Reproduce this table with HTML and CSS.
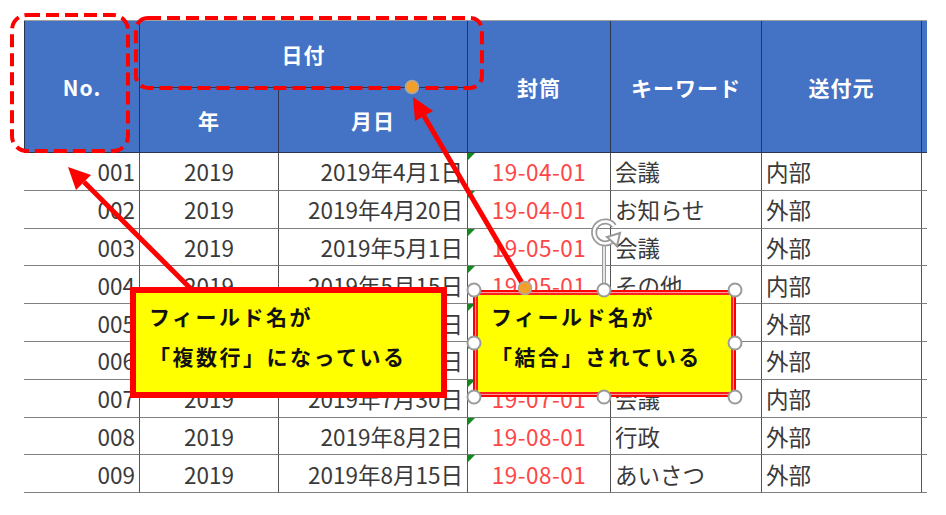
FILE: index.html
```html
<!DOCTYPE html>
<html lang="ja">
<head>
<meta charset="utf-8">
<link rel="stylesheet" href="styles.css">
</head>
<body>
<div class="page">
  <div class="sheet">
    <div class="hc h-no">No.</div>
    <div class="hc h-date">日付</div>
    <div class="hc h-env">封筒</div>
    <div class="hc h-kw">キーワード</div>
    <div class="hc h-from">送付元</div>
    <div class="hc h-rest"></div>
    <div class="hc h-year">年</div>
    <div class="hc h-md">月日</div>

    <div class="c num">001</div><div class="c ctr">2019</div><div class="c num">2019年4月1日</div><div class="c env">19-04-01</div><div class="c txt">会議</div><div class="c txt">内部</div><div class="c rest"></div>
    <div class="c num">002</div><div class="c ctr">2019</div><div class="c num">2019年4月20日</div><div class="c env">19-04-01</div><div class="c txt">お知らせ</div><div class="c txt">外部</div><div class="c rest"></div>
    <div class="c num">003</div><div class="c ctr">2019</div><div class="c num">2019年5月1日</div><div class="c env">19-05-01</div><div class="c txt">会議</div><div class="c txt">外部</div><div class="c rest"></div>
    <div class="c num">004</div><div class="c ctr">2019</div><div class="c num">2019年5月15日</div><div class="c env">19-05-01</div><div class="c txt">その他</div><div class="c txt">内部</div><div class="c rest"></div>
    <div class="c num">005</div><div class="c ctr">2019</div><div class="c num">2019年6月3日</div><div class="c env">19-06-01</div><div class="c txt">会議</div><div class="c txt">外部</div><div class="c rest"></div>
    <div class="c num">006</div><div class="c ctr">2019</div><div class="c num">2019年6月20日</div><div class="c env">19-06-01</div><div class="c txt">行政</div><div class="c txt">外部</div><div class="c rest"></div>
    <div class="c num">007</div><div class="c ctr">2019</div><div class="c num">2019年7月30日</div><div class="c env">19-07-01</div><div class="c txt">会議</div><div class="c txt">内部</div><div class="c rest"></div>
    <div class="c num">008</div><div class="c ctr">2019</div><div class="c num">2019年8月2日</div><div class="c env">19-08-01</div><div class="c txt">行政</div><div class="c txt">外部</div><div class="c rest"></div>
    <div class="c num">009</div><div class="c ctr">2019</div><div class="c num">2019年8月15日</div><div class="c env">19-08-01</div><div class="c txt">あいさつ</div><div class="c txt">外部</div><div class="c rest"></div>
  </div>

  <svg class="marks" width="946" height="515" viewBox="0 0 946 515">
    <rect x="12" y="15" width="116" height="136" rx="15" fill="none" stroke="#ff0000" stroke-width="4" stroke-dasharray="13 6"/>
    <rect x="136" y="18" width="346" height="70" rx="12" fill="none" stroke="#ff0000" stroke-width="4" stroke-dasharray="13 6"/>
    <line x1="192" y1="290" x2="84" y2="182" stroke="#ff0000" stroke-width="5"/>
    <polygon points="68,167 91,175 76,190" fill="#ff0000"/>
    <line x1="525" y1="288" x2="424" y2="116" stroke="#ff0000" stroke-width="5"/>
    <polygon points="413,97 433,111 415,121" fill="#ff0000"/>
    <circle cx="412" cy="87" r="6.5" fill="#f2a02a" stroke="#a8a8a8" stroke-width="1.5"/>
  </svg>

  <div class="callout callout-a">
    <p>フィールド名が</p>
    <p>「複数行」になっている</p>
  </div>
  <div class="callout callout-b">
    <p>フィールド名が</p>
    <p>「結合」されている</p>
  </div>

  <svg class="handles" width="946" height="515" viewBox="0 0 946 515">
    <line x1="604" y1="244" x2="604" y2="286" stroke="#9a9a9a" stroke-width="4"/>
    <line x1="604" y1="244" x2="604" y2="286" stroke="#ffffff" stroke-width="1.5"/>
    <path d="M612 241 A11 11 0 1 1 614 226" fill="none" stroke="#9a9a9a" stroke-width="6"/>
    <path d="M612 241 A11 11 0 1 1 614 226" fill="none" stroke="#ffffff" stroke-width="2.5"/>
    <polygon points="607,237 620,233 617,246" fill="#ffffff" stroke="#9a9a9a" stroke-width="2"/>
    <g fill="#ffffff" stroke="#9a9a9a" stroke-width="2">
      <circle cx="474" cy="290" r="6.5"/>
      <circle cx="604" cy="290" r="6.5"/>
      <circle cx="735" cy="290" r="6.5"/>
      <circle cx="474" cy="343" r="6.5"/>
      <circle cx="735" cy="343" r="6.5"/>
      <circle cx="474" cy="397" r="6.5"/>
      <circle cx="604" cy="397" r="6.5"/>
      <circle cx="735" cy="397" r="6.5"/>
    </g>
    <circle cx="525" cy="288" r="6.5" fill="#f2a02a" stroke="#a8a8a8" stroke-width="1.5"/>
  </svg>
</div>
</body>
</html>
```

FILE: styles.css
```css
* { box-sizing: border-box; }
html, body { margin: 0; padding: 0; background: #ffffff; }
.page {
  position: relative;
  width: 946px;
  height: 515px;
  padding: 20px 0 0 24px;
  font-family: "Noto Sans CJK JP", "Noto Sans", sans-serif;
}
.sheet {
  display: grid;
  grid-template-columns: 116px 139px 189px 143px 151px 160px 5px;
  grid-template-rows: 67px 65px repeat(9, 37.8px);
  width: 903px;
  border-top: 1px solid #a0a0a0;
}
.hc {
  background: #4472c4;
  color: #ffffff;
  font-weight: bold;
  font-size: 21px;
  display: flex;
  align-items: center;
  justify-content: center;
  border-right: 1px solid #2a3550;
  border-bottom: 1px solid #2a3550;
  letter-spacing: 1px;
}
.h-no { grid-row: 1 / 3; grid-column: 1; border-left: 1px solid #2a3550; }
.h-date { grid-row: 1; grid-column: 2 / 4; }
.h-env { grid-row: 1 / 3; grid-column: 4; }
.h-kw { grid-row: 1 / 3; grid-column: 5; }
.h-from { grid-row: 1 / 3; grid-column: 6; }
.h-rest { grid-row: 1 / 3; grid-column: 7; border-right: none; }
.h-year { grid-row: 2; grid-column: 2; }
.h-md { grid-row: 2; grid-column: 3; }

.c {
  position: relative;
  font-size: 22.5px;
  color: #3a3a3a;
  display: flex;
  align-items: center;
  border-right: 1px solid #555555;
  border-bottom: 1px solid #808080;
  white-space: nowrap;
  overflow: hidden;
}
.c.num { justify-content: flex-end; padding-right: 4px; }
.c.num:nth-child(7n+1) { border-left: 1px solid #8a8a8a; }
.c.ctr { justify-content: center; }
.c.txt { padding-left: 4px; }
.c.env {
  justify-content: center;
  color: #ff4646;
  letter-spacing: 0.5px;
}
.c.env::before {
  content: "";
  position: absolute;
  left: 0;
  top: 0;
  border-top: 7px solid #11891f;
  border-right: 7px solid transparent;
}
.c.rest { border-right: none; }

.marks, .handles {
  position: absolute;
  left: 0;
  top: 0;
  pointer-events: none;
}

.callout {
  position: absolute;
  background: #ffff00;
  font-weight: bold;
  font-size: 21px;
  color: #111111;
  letter-spacing: 2.5px;
}
.callout p { margin: 0; line-height: 40px; white-space: nowrap; }
.callout-a {
  left: 130px;
  top: 287px;
  width: 317px;
  height: 111px;
  border: 6px solid #ff0000;
  padding: 3px 0 0 13px;
}
.callout-b {
  left: 473px;
  top: 290px;
  width: 263px;
  height: 107px;
  border: 2px solid #ff0000;
  box-shadow: inset 0 0 0 1px #ff9a9a, inset 0 0 0 3px #ff2020;
  padding: 4px 0 0 16px;
}
```
